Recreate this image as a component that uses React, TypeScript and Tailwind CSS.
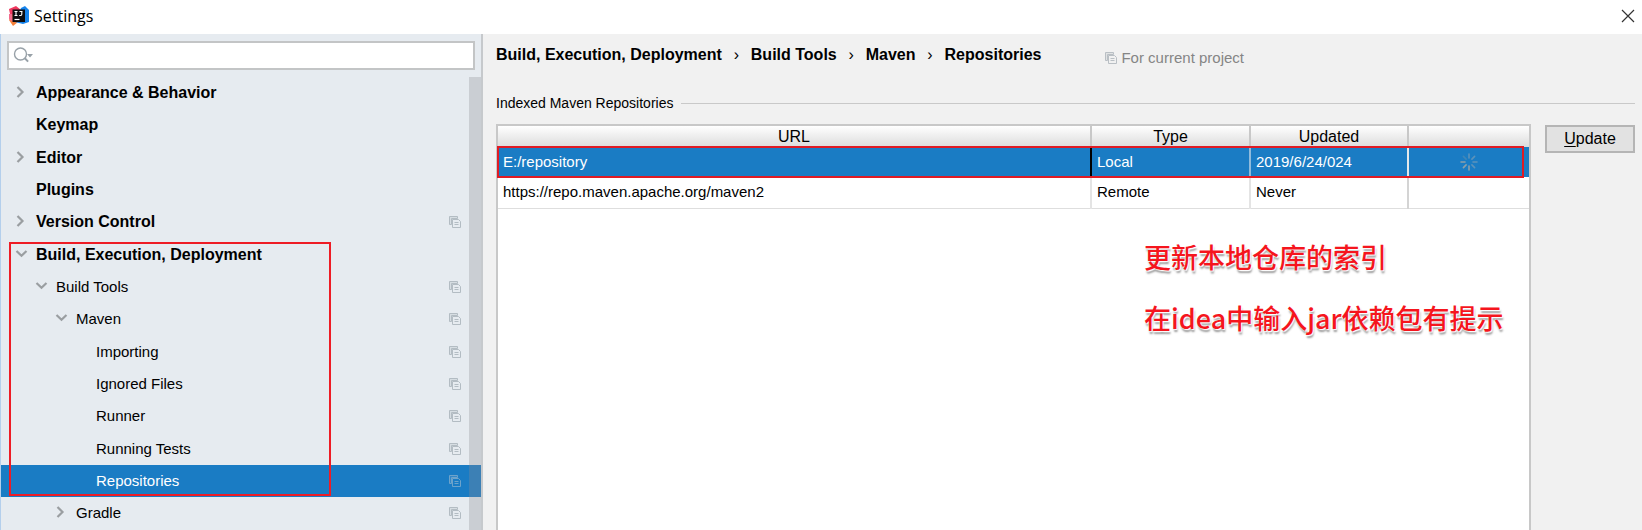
import { Fragment } from "react";

type Node = {
  label: string;
  level: number;
  state?: "open" | "closed";
  project?: boolean;
  selected?: boolean;
};

const nodes: Node[] = [
  { label: "Appearance & Behavior", level: 0, state: "closed" },
  { label: "Keymap", level: 0 },
  { label: "Editor", level: 0, state: "closed" },
  { label: "Plugins", level: 0 },
  { label: "Version Control", level: 0, state: "closed", project: true },
  { label: "Build, Execution, Deployment", level: 0, state: "open" },
  { label: "Build Tools", level: 1, state: "open", project: true },
  { label: "Maven", level: 2, state: "open", project: true },
  { label: "Importing", level: 3, project: true },
  { label: "Ignored Files", level: 3, project: true },
  { label: "Runner", level: 3, project: true },
  { label: "Running Tests", level: 3, project: true },
  { label: "Repositories", level: 3, project: true, selected: true },
  { label: "Gradle", level: 2, state: "closed", project: true },
];

const indents = ["pl-[11px]", "pl-[31px]", "pl-[51px]", "pl-[71px]"];

const crumbs = ["Build, Execution, Deployment", "Build Tools", "Maven", "Repositories"];

function ProjectIcon() {
  return (
    <svg width="12" height="12" viewBox="0 0 12 12" fill="none" stroke="currentColor" className="shrink-0" aria-hidden="true">
      <path d="M0.500 0.500h8v2h-6v6h-2z" fill="currentColor" fillOpacity="0.3" />
      <path d="M3.500 3.500h6l2 2v6h-8z" />
      <path d="M5.500 6.500h4M5.500 8.500h4" />
    </svg>
  );
}

function Chevron({ state }: { state?: "open" | "closed" }) {
  return (
    <svg width="16" height="16" viewBox="0 0 16 16" fill="none" stroke="#9a9ea1" strokeWidth="2.200" className="shrink-0" aria-hidden="true">
      {state === "closed" && <path d="M5.500 2l5 5-5 5" />}
      {state === "open" && <path d="M4.500 4l5 4.800 5-4.800" />}
    </svg>
  );
}

function Logo() {
  return (
    <svg width="20" height="20" viewBox="0 0 20 20" aria-hidden="true">
      <path d="M0 3l7-3 5 4-5 10-5-1z" fill="#f0385f" />
      <path d="M0 14l4-6 5 8-5 4z" fill="#f5803a" />
      <path d="M12 2l4-2 4 4v12l-6 2-8-2z" fill="#1583ec" />
      <path d="M0 8l3 0 1 8-4-3z" fill="#f26a8d" />
      <rect x="3.500" y="3.500" width="12.500" height="12.500" fill="#0c0c10" />
      <path d="M5.500 5.500h3M7 5.500v4M5.500 9.500h3M10.500 5.500h3M12.800 5.500v2.800q0 1.200-1.200 1.200h-1.400" stroke="#fff" strokeWidth="1.100" fill="none" />
      <path d="M5.500 13.500h5" stroke="#fff" strokeWidth="1.200" />
    </svg>
  );
}

function Spinner() {
  return (
    <svg width="18" height="18" viewBox="0 0 18 18" strokeWidth="1.600" strokeLinecap="round" className="mx-auto" role="img" aria-label="Updating">
      <g stroke="#5c92ba">
        <path d="M9 1v4" />
        <path d="M14.600 3.400l-2.700 2.700" />
        <path d="M17 9h-4" />
        <path d="M14.600 14.600l-2.700-2.700" />
      </g>
      <g stroke="#8e9fa9">
        <path d="M9 17v-4" />
        <path d="M3.400 14.600l2.700-2.700" />
        <path d="M1 9h4" />
      </g>
      <path d="M3.400 3.400l2.700 2.700" stroke="#3f86b9" />
    </svg>
  );
}

function Sidebar() {
  return (
    <aside className="relative flex w-[483px] shrink-0 flex-col border-r-2 border-l border-r-[#c6c9cc] border-l-[#b4cfec] bg-[#e6ebf0]">
      <div className="mx-[6px] mt-[7px] mb-[7px] flex h-[29px] items-center border-2 border-[#c3c5c6] bg-white pl-1">
        <svg width="21" height="18" viewBox="0 0 21 18" fill="none" className="shrink-0" aria-hidden="true">
          <circle cx="7.500" cy="7" r="6" stroke="#98a1a8" strokeWidth="1.400" />
          <path d="M11.800 11.300l3.300 3.300" stroke="#98a1a8" strokeWidth="2" />
          <path d="M14 7h6l-3 3.500z" fill="#98a1a8" />
        </svg>
        <input type="search" aria-label="Search settings" className="min-w-0 flex-1 bg-transparent px-1 text-base outline-none" />
      </div>
      <div className="relative flex-1">
        <ul role="tree" aria-label="Settings categories">
          {nodes.map((n) => (
            <li
              key={n.label}
              role="treeitem"
              aria-level={n.level + 1}
              aria-selected={!!n.selected}
              className={`flex h-8 items-center pr-5 nth-[3n]:h-[33px] ${indents[n.level]} ${
                n.selected ? "bg-[#1a7cc4] text-white" : ""
              }`}
            >
              <Chevron state={n.state} />
              <span className={`ml-2 flex-1 ${n.level === 0 ? "text-base leading-5 font-bold" : ""}`}>{n.label}</span>
              {n.project && (
                <span className={n.selected ? "text-[#6da3cb]" : "text-[#b3bcc3]"}>
                  <ProjectIcon />
                </span>
              )}
            </li>
          ))}
        </ul>
        <div className="absolute inset-y-0 right-0 w-3 bg-[#8c8c93]/30" />
        <div className="absolute top-[165px] left-2 h-[254px] w-[322px] border-2 border-[#ee1c25]" />
      </div>
    </aside>
  );
}

function Repositories() {
  return (
    <div className="relative min-w-0 flex-1 border-2 border-b-0 border-[#c8c8c8] bg-white">
      <table className="w-full table-fixed border-collapse text-left">
        <colgroup>
          <col />
          <col className="w-[159px]" />
          <col className="w-[158px]" />
          <col className="w-[121px]" />
        </colgroup>
        <thead>
          <tr className="h-[21px] bg-linear-to-b from-white to-[#dcdcdc] text-center text-base leading-5">
            <th className="border-r-2 border-[#c8c8c8] p-0 font-normal">URL</th>
            <th className="border-r-2 border-[#c8c8c8] p-0 font-normal">Type</th>
            <th className="border-r-2 border-[#c8c8c8] p-0 font-normal">Updated</th>
            <th className="p-0" aria-label="Status" />
          </tr>
        </thead>
        <tbody>
          <tr className="h-[30px] bg-[#1a7cc4] text-white">
            <td className="border-r-2 border-black px-[5px]">E:/repository</td>
            <td className="border-r-2 border-[#8fbbdc] px-[5px]">Local</td>
            <td className="border-r-2 border-[#e4e8ea] px-[5px]">2019/6/24/024</td>
            <td className="p-0">
              <Spinner />
            </td>
          </tr>
          <tr className="h-[31px] border-b border-[#dedede]">
            <td className="border-r-2 border-[#e4e4e4] px-[5px]">https://repo.maven.apache.org/maven2</td>
            <td className="border-r-2 border-[#e4e4e4] px-[5px]">Remote</td>
            <td className="border-r-2 border-[#d4d4d4] px-[5px]">Never</td>
            <td className="p-0" />
          </tr>
        </tbody>
      </table>
      <div className="absolute top-5 right-[5px] -left-px h-8 border-2 border-[#e01b24]" />
      <div className="absolute top-[111px] right-[25px] w-[360px] font-['Noto_Sans_CJK_SC',sans-serif] text-[27px] leading-[40px] font-medium whitespace-nowrap text-[#f5151d] [text-shadow:0_0_2px_#fff,1px_1px_1px_#fff,1px_3px_2px_#9a9a9a]">
        <p>更新本地仓库的索引</p>
        <p className="mt-[21px]">在idea中输入jar依赖包有提示</p>
      </div>
    </div>
  );
}

export default function App() {
  return (
    <div className="flex h-screen flex-col overflow-hidden bg-[#f1f1f1] font-['Liberation_Sans',Arial,sans-serif] text-[15px] leading-5 text-black">
      <header className="flex h-[34px] shrink-0 items-center bg-white pr-[7px] pb-[2px] pl-[9px]">
        <Logo />
        <h1 className="ml-[5px] flex-1 font-['Open_Sans',sans-serif] text-base">Settings</h1>
        <button type="button" aria-label="Close" className="flex size-[14px] items-center justify-center">
          <svg width="14" height="14" viewBox="0 0 14 14" stroke="#333" strokeWidth="1.200" aria-hidden="true">
            <path d="M1 1l12 12M13 1L1 13" />
          </svg>
        </button>
      </header>
      <div className="flex min-h-0 flex-1">
        <Sidebar />
        <main className="flex min-w-0 flex-1 flex-col pt-[11px] pr-[7px] pl-[13px]">
          <div className="flex items-start">
            <nav aria-label="Breadcrumb" className="flex items-center text-base leading-5 font-bold">
              {crumbs.map((c, i) => (
                <Fragment key={c}>
                  {i > 0 && <span className="w-[29px] text-center font-normal">›</span>}
                  <a href="#">{c}</a>
                </Fragment>
              ))}
            </nav>
            <p className="mt-[3px] ml-[64px] flex items-center gap-1 text-[#858585]">
              <span className="text-[#b9bfc4]">
                <ProjectIcon />
              </span>
              For current project
            </p>
          </div>
          <div className="mt-[25px] flex items-center gap-2">
            <h2 className="text-sm leading-5">Indexed Maven Repositories</h2>
            <span className="h-px flex-1 bg-[#c9c9c9]" />
          </div>
          <div className="mt-[11px] flex min-h-0 flex-1 gap-[14px]">
            <Repositories />
            <button type="button" className="mt-px h-7 w-[90px] border-2 border-[#b5b5b5] bg-[#e2e2e2] text-base leading-5">
              <span className="underline underline-offset-2">U</span>pdate
            </button>
          </div>
        </main>
      </div>
    </div>
  );
}
